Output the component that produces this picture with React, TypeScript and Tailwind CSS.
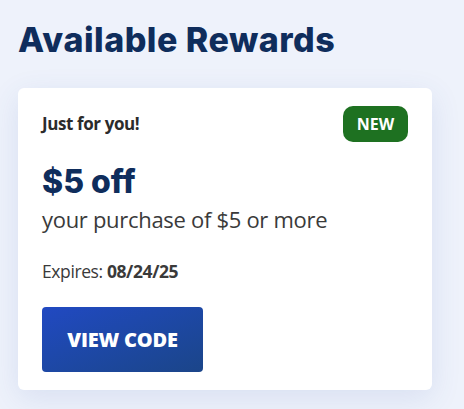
export default function App() {
  return (
    <div className="w-[464px] h-[409px] overflow-hidden bg-[#eef2fb] px-[18px] pt-[20px]" style={{ fontFamily: '"Open Sans", sans-serif' }}>
      <h1 className="text-[34px] leading-[40px] font-extrabold text-[#0f2d5c] tracking-[0.5px]" style={{ fontFamily: 'Inter, sans-serif' }}>
        Available Rewards
      </h1>
      <div className="mt-[28px] w-[414px] h-[302px] bg-white rounded-[6px] shadow-[0_8px_30px_rgba(60,90,170,0.12)] px-[24px] pt-[18px]">
        <div className="flex items-center justify-between">
          <span className="text-[17px] font-bold text-[#2b2b2b] tracking-[-0.4px]">Just for you!</span>
          <span className="h-[36px] w-[65px] rounded-[10px] bg-[#1e7121] text-white text-[16px] font-bold flex items-center justify-center">NEW</span>
        </div>
        <div className="mt-[22px] text-[32px] leading-[36px] font-extrabold text-[#0f2d5c]" style={{ fontFamily: 'Inter, sans-serif' }}>$5 off</div>
        <div className="mt-[4px] text-[22px] leading-[30px] text-[#3a3a3a] tracking-[-0.3px]">your purchase of $5 or more</div>
        <div className="mt-[26px] text-[17.5px] leading-[22px] text-[#3a3a3a] tracking-[-0.4px]">
          Expires: <span className="font-bold">08/24/25</span>
        </div>
        <button className="mt-[25px] w-[161px] h-[65px] rounded-[4px] bg-gradient-to-br from-[#2149c2] to-[#1b4589] text-white text-[20px] font-extrabold tracking-[-0.2px]">
          VIEW CODE
        </button>
      </div>
    </div>
  );
}
